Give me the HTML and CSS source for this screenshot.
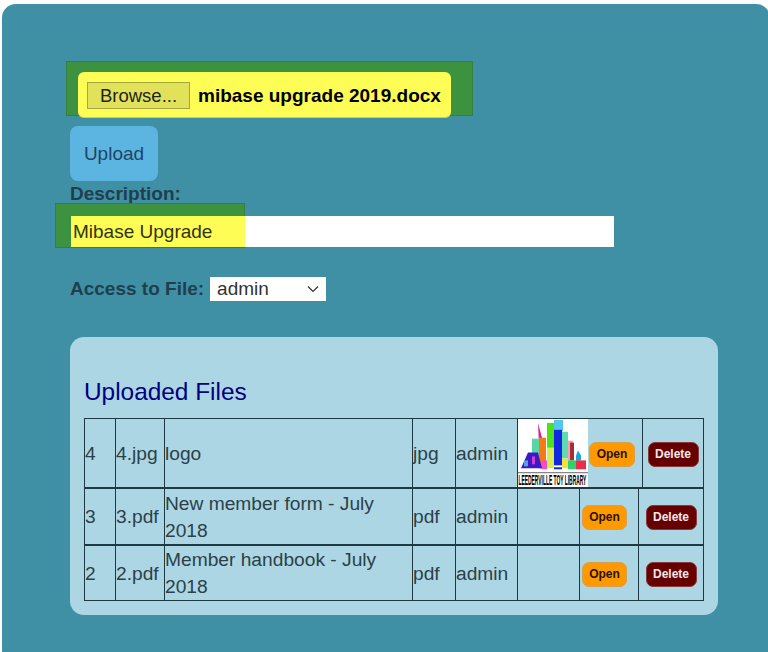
FILE: index.html
```html
<!DOCTYPE html>
<html lang="en">
<head>
    <meta charset="UTF-8">
    <meta name="viewport" content="width=device-width, initial-scale=1.0">
    <title>Upload Files</title>
    <link rel="stylesheet" href="styles.css">
</head>
<body>

    <div class="panel">
        <form class="upload-form">
            <div class="file-mark">
                <div class="file-box">
                    <button type="button" class="browse">Browse...</button>
                    <span class="file-name">mibase upgrade 2019.docx</span>
                </div>
            </div>
            <button type="button" class="upload">Upload</button>
            <label class="desc-label">Description:</label>
            <div class="desc-row">
                <div class="desc-mark"></div>
                <div class="desc-input">
                    <span class="desc-fill">Mibase Upgrade</span>
                </div>
            </div>
            <div class="access-row">
                <label>Access to File:</label>
                <div class="select-box">
                    <span>admin</span>
                    <svg class="chevron" width="12" height="8" viewBox="0 0 12 8"><path d="M1 1.5l5 5 5-5" fill="none" stroke="#333" stroke-width="1.2"/></svg>
                </div>
            </div>
        </form>

        <div class="files-card">
            <h2>Uploaded Files</h2>

            <table class="files files-logo">
                <colgroup><col class="c-id"><col class="c-file"><col class="c-desc"><col class="c-type"><col class="c-access"><col class="c-img"><col class="c-open"><col class="c-del"></colgroup>
                <tr>
                    <td>4</td>
                    <td>4.jpg</td>
                    <td>logo</td>
                    <td>jpg</td>
                    <td>admin</td>
                    <td class="thumb">
                        <svg width="70" height="68" viewBox="0 0 70 69" preserveAspectRatio="none">
                            <rect width="70" height="69" fill="#fff"/>
                            <polygon points="20,4 27,30 27,50 22,50" fill="#d81fa8"/>
                            <rect x="14" y="20" width="9" height="20" fill="#58d6a8"/>
                            <rect x="21" y="19" width="7" height="31" fill="#f47a16"/>
                            <rect x="29" y="4" width="7" height="26" fill="#4fe01c"/>
                            <rect x="29" y="29" width="7" height="21" fill="#d6ee50"/>
                            <rect x="36" y="1" width="9" height="11" fill="#52c8ee"/>
                            <rect x="36" y="11" width="8" height="40" fill="#1326e0"/>
                            <rect x="44" y="13" width="6" height="27" fill="#5cdcb0"/>
                            <rect x="44" y="40" width="6" height="10" fill="#f0e040"/>
                            <rect x="50" y="22" width="5" height="20" fill="#f2a0c0"/>
                            <rect x="52" y="24" width="4" height="18" fill="#a83030"/>
                            <polygon points="60,32 63,37 63,42 58,42 58,37" fill="#18a8d8"/>
                            <rect x="50" y="42" width="9" height="9" fill="#30d070"/>
                            <rect x="58" y="42" width="10" height="9" fill="#e83048"/>
                            <polygon points="10,34 20,34 24,50 3,50" fill="#3b18c8"/>
                            <rect x="6" y="42" width="4" height="6" fill="#58a0e0"/>
                            <rect x="14" y="38" width="3" height="8" fill="#d040d0"/>
                            <rect x="24" y="42" width="5" height="9" fill="#f050c0"/>
                            <rect x="36" y="47" width="8" height="2" fill="#fff"/>
                            <rect x="0" y="54" width="70" height="1" fill="#666"/>
                            <text class="logo-text" transform="translate(0.5 67) scale(0.35 1)">LEEDERVILLE TOY LIBRARY</text>
                        </svg>
                    </td>
                    <td><a class="btn btn-open">Open</a></td>
                    <td class="act"><a class="btn btn-del">Delete</a></td>
                </tr>
            </table>

            <table class="files">
                <colgroup><col class="c-id"><col class="c-file"><col class="c-desc"><col class="c-type"><col class="c-access"><col class="c-img2"><col class="c-open2"><col class="c-del2"></colgroup>
                <tr class="row-tall">
                    <td>3</td>
                    <td>3.pdf</td>
                    <td>New member form - July 2018</td>
                    <td>pdf</td>
                    <td>admin</td>
                    <td></td>
                    <td><a class="btn btn-open btn-open-sm">Open</a></td>
                    <td class="act"><a class="btn btn-del">Delete</a></td>
                </tr>
            </table>

            <table class="files">
                <colgroup><col class="c-id"><col class="c-file"><col class="c-desc"><col class="c-type"><col class="c-access"><col class="c-img2"><col class="c-open2"><col class="c-del2"></colgroup>
                <tr>
                    <td>2</td>
                    <td>2.pdf</td>
                    <td>Member handbook - July 2018</td>
                    <td>pdf</td>
                    <td>admin</td>
                    <td></td>
                    <td><a class="btn btn-open btn-open-sm">Open</a></td>
                    <td class="act"><a class="btn btn-del">Delete</a></td>
                </tr>
            </table>
        </div>
    </div>

</body>
</html>
```

FILE: styles.css
```css
html, body { height: 100%; }
body {
    margin: 0;
    overflow: hidden;
    background: #fff;
    font-family: "Liberation Sans", Arial, sans-serif;
    font-size: 19px;
    color: #2b4148;
}
.panel {
    box-sizing: border-box;
    width: 768px;
    height: 660px;
    margin: 4px 0 0 2px;
    padding: 58px 50px 0 68px;
    background: #3f8fa5;
    border-radius: 14px;
}

/* file picker */
.file-mark {
    box-sizing: border-box;
    width: 407px;
    height: 55px;
    margin: -1px 0 0 -4px;
    padding: 10px 0 0 11px;
    background: #3c923f;
    border: 1px solid #35803a;
}
.file-box {
    display: flex;
    align-items: center;
    box-sizing: border-box;
    width: 373px;
    height: 46px;
    padding: 2px 0 0 9px;
    background: #fdfd55;
    border-radius: 6px;
    border-bottom: 1px solid #d8c860;
}
.browse {
    width: 103px;
    height: 27px;
    padding: 0;
    background: #e2e25a;
    border: 1px solid #a6a640;
    font: 18.5px "Liberation Sans", Arial, sans-serif;
    color: #222;
}
.file-name {
    margin-left: 8px;
    font-size: 19px;
    font-weight: bold;
    color: #000;
}
.upload {
    display: block;
    width: 88px;
    height: 55px;
    margin-top: 10px;
    padding: 0;
    background: #5bb5e0;
    border: 0;
    border-radius: 8px;
    font: 19px "Liberation Sans", Arial, sans-serif;
    color: #1f4466;
}
.desc-label {
    display: block;
    margin-top: 2px;
    line-height: 22px;
    font-weight: bold;
    color: #1f3f4f;
}
.desc-row {
    position: relative;
    margin-top: 11px;
}
.desc-mark {
    position: absolute;
    left: -15px;
    top: -13px;
    width: 190px;
    height: 45px;
    box-sizing: border-box;
    background: #3c923f;
    border: 1px solid #35803a;
}
.desc-input {
    position: relative;
    width: 543px;
    height: 31px;
    margin-left: 1px;
    background: #fff;
}
.desc-fill {
    display: block;
    box-sizing: border-box;
    width: 174px;
    height: 31px;
    padding-left: 2px;
    line-height: 31px;
    background: #fdfd55;
    color: #33330f;
}
.access-row {
    display: flex;
    align-items: center;
    gap: 6px;
    margin-top: 30px;
    font-weight: bold;
    color: #1f3f4f;
}
.select-box {
    position: relative;
    box-sizing: border-box;
    width: 116px;
    height: 24px;
    padding-left: 7px;
    line-height: 23px;
    background: #fff;
    font-weight: normal;
    color: #333;
}
.chevron {
    position: absolute;
    right: 7px;
    top: 8px;
}

/* uploaded files */
.files-card {
    box-sizing: border-box;
    width: 648px;
    height: 278px;
    margin-top: 36px;
    padding: 40px 14px 0;
    background: #add6e4;
    border-radius: 14px;
}
.files-card h2 {
    margin: 0 0 12px;
    font-size: 24.4px;
    font-weight: normal;
    line-height: 29px;
    color: #000080;
}
.files {
    width: 619px;
    table-layout: fixed;
    border-collapse: collapse;
    font-size: 19.2px;
    line-height: 27px;
}
.files td {
    height: 54px;
    padding: 0;
    border: 1px solid #1d3a44;
    vertical-align: middle;
}
.files-logo td { height: 68px; }
.row-tall td { height: 55px; }
.thumb svg { display: block; }
.logo-text {
    font-family: "Liberation Sans", Arial, sans-serif;
    font-size: 14px;
    font-weight: bold;
    fill: #000;
}
.c-id { width: 31px; }
.c-file { width: 49px; }
.c-desc { width: 248px; }
.c-type { width: 43px; }
.c-access { width: 62px; }
.c-img { width: 70px; }
.c-open { width: 55px; }
.c-del { width: 61px; }
.c-img2 { width: 62px; }
.c-open2 { width: 59px; }
.c-del2 { width: 65px; }
.files td.act { text-align: center; }
.btn {
    display: inline-block;
    box-sizing: border-box;
    width: 46px;
    height: 25px;
    border-radius: 7px;
    font-size: 12px;
    font-weight: bold;
    line-height: 23px;
    text-align: center;
    vertical-align: middle;
}
.btn-open {
    margin-left: 1px;
    background: #ff9900;
    border: 1px solid #d9a050;
    color: #2a1200;
}
.btn-open-sm {
    width: 45px;
    margin-left: 2px;
}
.btn-del {
    width: 51px;
    background: #660000;
    border: 1px solid #8a3a3a;
    color: #f4e8e8;
}
```
